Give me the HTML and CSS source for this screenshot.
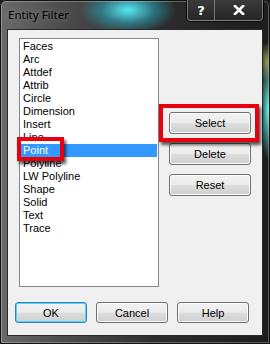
FILE: index.html
```html
<!DOCTYPE html>
<html lang="en">
<head>
    <meta charset="UTF-8">
    <title>Entity Filter</title>
    <link rel="stylesheet" href="styles.css">
</head>
<body>
    <div class="window">
        <div class="titlebar">
            <div class="title">Entity Filter</div>
            <div class="caption-buttons">
                <div class="cap-btn help-cap">?</div>
                <div class="cap-btn close-cap">
                    <svg width="12" height="10" viewBox="0 0 12 10">
                        <path d="M2 1 L10 9 M10 1 L2 9" stroke="#fff" stroke-width="2.6" stroke-linecap="square"/>
                    </svg>
                </div>
            </div>
        </div>
        <div class="client">
            <div class="main">
                <div class="listbox">
                    <div class="item">Faces</div>
                    <div class="item">Arc</div>
                    <div class="item">Attdef</div>
                    <div class="item">Attrib</div>
                    <div class="item">Circle</div>
                    <div class="item">Dimension</div>
                    <div class="item">Insert</div>
                    <div class="item">Line</div>
                    <div class="item selected">Point</div>
                    <div class="item">Polyline</div>
                    <div class="item">LW Polyline</div>
                    <div class="item">Shape</div>
                    <div class="item">Solid</div>
                    <div class="item">Text</div>
                    <div class="item">Trace</div>
                </div>
                <div class="side">
                    <button class="btn side-btn">Select</button>
                    <button class="btn side-btn">Delete</button>
                    <button class="btn side-btn">Reset</button>
                </div>
            </div>
            <div class="footer">
                <button class="btn foot-btn default">OK</button>
                <button class="btn foot-btn">Cancel</button>
                <button class="btn foot-btn">Help</button>
            </div>
        </div>
        <!-- annotation boxes drawn over the dialog -->
        <div class="mark mark-point"></div>
        <div class="mark mark-select"></div>
    </div>
</body>
</html>
```

FILE: styles.css
```css
body {
    margin: 0;
    width: 270px;
    height: 344px;
    overflow: hidden;
    background: #1a1a1a;
}
.window {
    position: relative;
    width: 270px;
    height: 344px;
    box-sizing: border-box;
    border-radius: 6px 6px 0 0;
    background:
        radial-gradient(ellipse 48px 24px at 128px 10px, rgba(90, 240, 250, 0.95), rgba(40, 170, 190, 0.55) 55%, rgba(40, 170, 190, 0) 100%),
        radial-gradient(ellipse 8px 50px at 268px 110px, rgba(90, 250, 235, 0.95), rgba(90, 250, 235, 0) 100%),
        radial-gradient(ellipse 8px 20px at 267px 62px, rgba(200, 200, 110, 0.7), rgba(200, 200, 110, 0) 100%),
        linear-gradient(to right, #6a6a6a 0, #4a4a4a 25%, #2c2c2c 60%, #1c1c1c 100%);
    box-shadow: inset 0 0 0 1px #111, inset 0 0 0 2px rgba(255, 255, 255, 0.28);
    font-family: "Liberation Sans", Arial, sans-serif;
    font-size: 11px;
    color: #000;
}
.titlebar {
    display: flex;
    height: 29px;
}
.title {
    padding-left: 8px;
    line-height: 30px;
    font-family: "Noto Sans", "DejaVu Sans", sans-serif;
    font-size: 11.5px;
    color: #000;
    text-shadow: 0 0 6px rgba(255, 255, 255, 0.35);
}
.caption-buttons {
    display: flex;
    margin-left: auto;
    margin-right: 7px;
    height: 20px;
    border: 1px solid rgba(255, 255, 255, 0.35);
    border-top: none;
    border-radius: 0 0 4px 4px;
    box-shadow: 0 0 0 1px rgba(0, 0, 0, 0.7);
    background: linear-gradient(#3a3a3a, #262626);
}
.cap-btn {
    display: flex;
    align-items: center;
    justify-content: center;
    color: #fff;
    font-family: "DejaVu Sans", sans-serif;
    font-weight: bold;
    font-size: 13px;
}
.help-cap {
    width: 26px;
    border-right: 1px solid rgba(255, 255, 255, 0.35);
}
.close-cap {
    width: 47px;
}
.client {
    margin: 0 7px;
    height: 307px;
    box-sizing: border-box;
    background: #f0f0f0;
    border: 1px solid #2a2a2a;
    display: flex;
    flex-direction: column;
}
.main {
    display: flex;
    padding: 8px 0 0 11px;
}
.listbox {
    width: 140px;
    height: 249px;
    box-sizing: border-box;
    border: 1px solid #828790;
    background: #fff;
    padding: 1px;
}
.item {
    height: 13px;
    line-height: 13px;
    padding-left: 2px;
    white-space: nowrap;
}
.item.selected {
    background: #3399ff;
    color: #fff;
}
.side {
    display: flex;
    flex-direction: column;
    gap: 9px;
    margin: 74px 0 0 10px;
}
.btn {
    box-sizing: border-box;
    border: 1px solid #707070;
    border-radius: 3px;
    background: linear-gradient(#f2f2f2 0%, #ebebeb 48%, #dddddd 52%, #cfcfcf 100%);
    box-shadow: inset 0 0 0 1px #fbfbfb;
    font-family: "Liberation Sans", Arial, sans-serif;
    font-size: 11px;
    color: #000;
    padding: 0;
}
.side-btn {
    width: 82px;
    height: 22px;
}
.footer {
    display: flex;
    gap: 9px;
    padding: 15px 0 0 7px;
}
.foot-btn {
    width: 72px;
    height: 21px;
}
.btn.default {
    border-color: #3c7fb1;
    box-shadow: inset 0 0 0 1px #48d8fb;
}
.mark {
    position: absolute;
    box-sizing: border-box;
    border: 4px solid #e8000d;
    box-shadow: 2px 3px 3px rgba(0, 0, 0, 0.65);
}
.mark-point {
    left: 17px;
    top: 137px;
    width: 47px;
    height: 24px;
}
.mark-select {
    left: 159px;
    top: 104px;
    width: 100px;
    height: 38px;
}
```
